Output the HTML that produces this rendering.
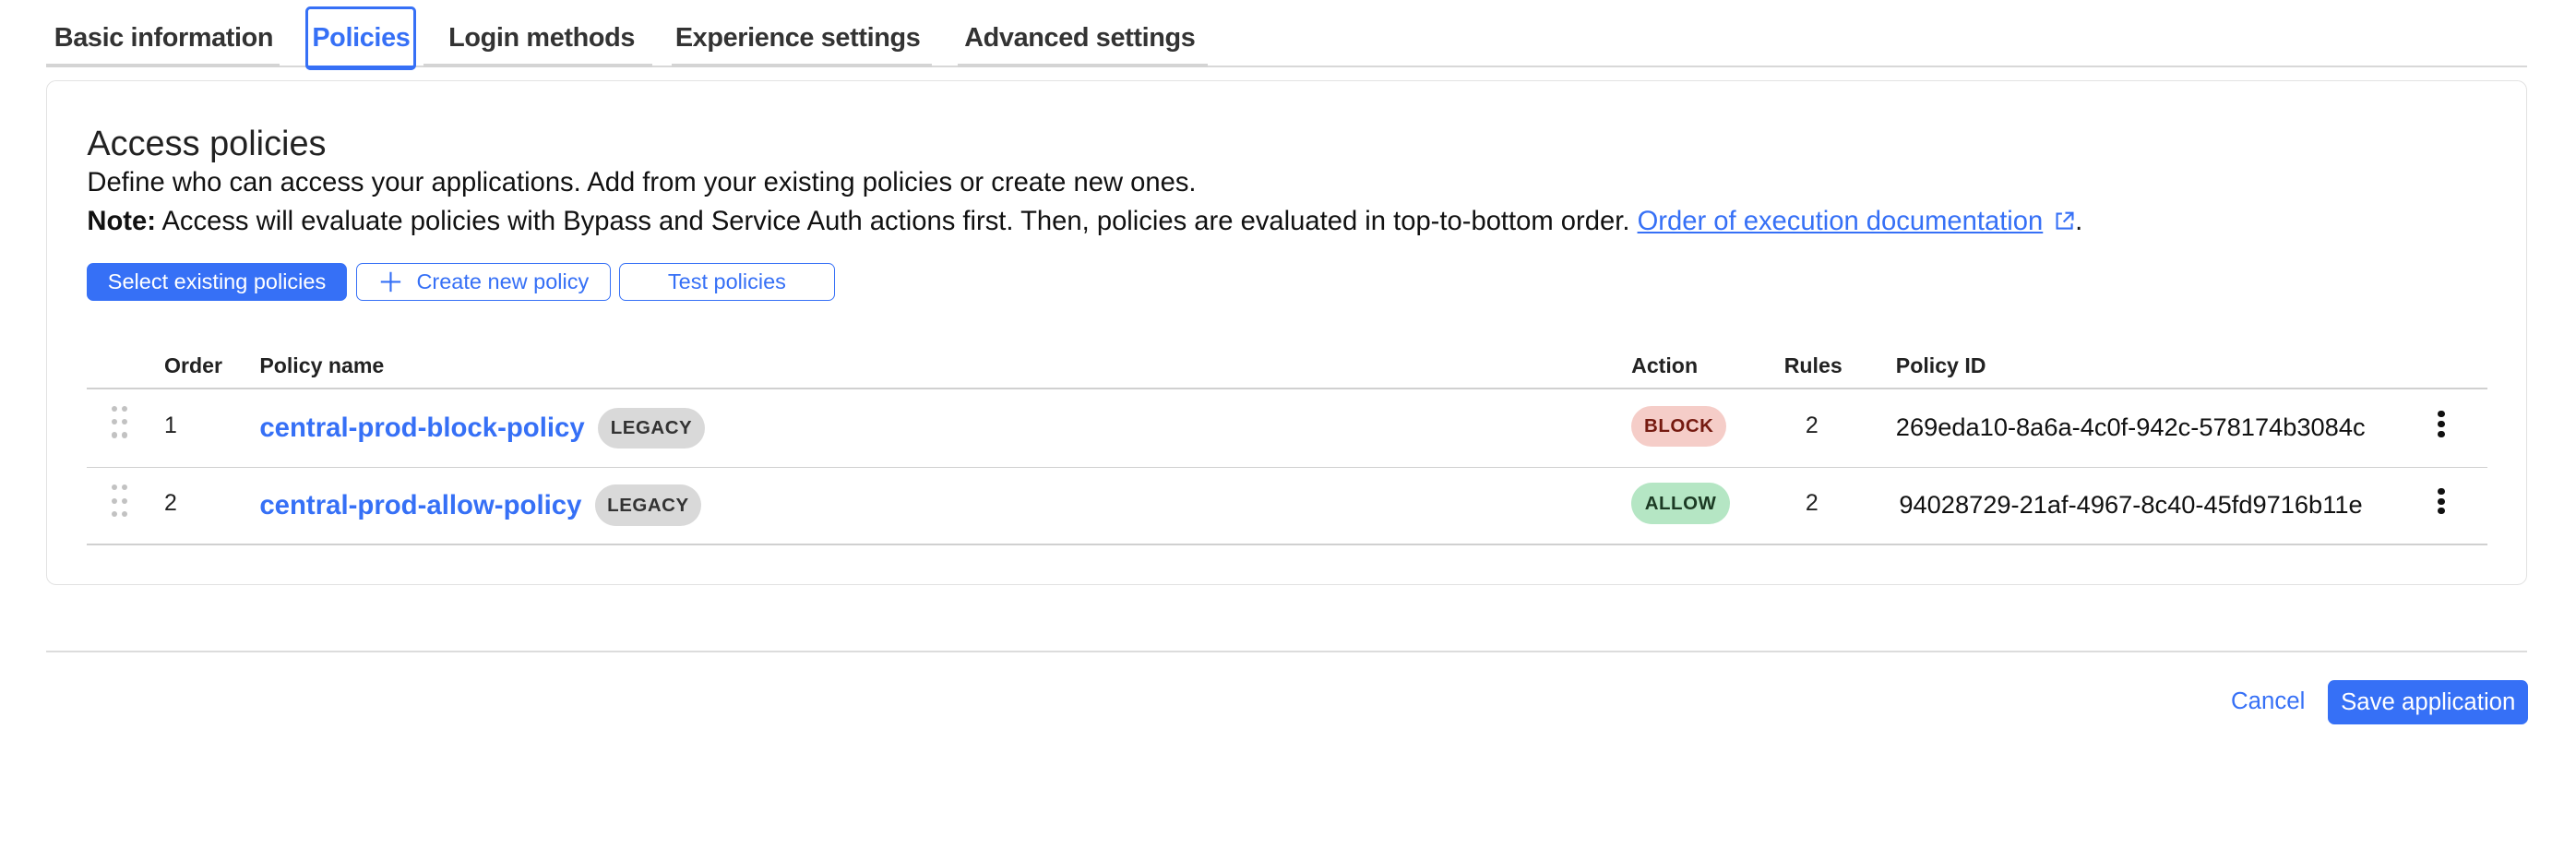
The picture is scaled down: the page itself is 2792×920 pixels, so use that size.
<!DOCTYPE html>
<html><head><meta charset="utf-8"><style>
html,body{margin:0;padding:0;background:#fff;overflow:hidden}
body{width:2792px;height:920px}
#w{zoom:1.7806;width:1568px;height:517px;position:relative;font-family:"Liberation Sans",Arial,sans-serif;color:#222}
.a{position:absolute;white-space:nowrap}
.tab{position:absolute;top:14px;font-size:16.2px;font-weight:bold;color:#333;letter-spacing:-0.2px}
.ul{position:absolute;top:39px;height:2px;background:#d4d4d4}
.blue{color:#3670f6}
.btn{position:absolute;top:160px;height:23px;border:1px solid #3670f6;border-radius:4px;box-sizing:border-box;font-size:13.2px;color:#3670f6;display:flex;align-items:center;justify-content:center}
.th{position:absolute;top:215px;font-size:13px;font-weight:bold;color:#222}
.line{position:absolute;left:53px;width:1461px;height:1px;background:#d0d0d0}
.pill{position:absolute;height:25px;border-radius:13px;font-size:11.5px;font-weight:bold;display:flex;align-items:center;justify-content:center;letter-spacing:0.3px}
.dots{position:absolute;left:68px;width:11px;height:19px}
.dots i{position:absolute;width:3.5px;height:3.5px;border-radius:50%;background:#c2c2c2}
.keb{position:absolute;left:1484px;width:4px}
.keb i{position:absolute;left:0;width:4px;height:4px;border-radius:50%;background:#111}
</style></head><body><div id="w">
<div class="tab" style="left:33px">Basic information</div>
<div class="tab blue" style="left:190px">Policies</div>
<div class="tab" style="left:273px">Login methods</div>
<div class="tab" style="left:411px">Experience settings</div>
<div class="tab" style="left:587px">Advanced settings</div>
<div class="ul" style="left:28px;width:1510px;height:1px;top:40px;background:#d8d8d8"></div>
<div class="ul" style="left:28px;width:142px"></div>
<div class="ul" style="left:258px;width:139px"></div>
<div class="ul" style="left:409px;width:158px"></div>
<div class="ul" style="left:583px;width:152px"></div>
<div class="a" style="left:186px;top:4px;width:64px;height:34px;border:2px solid #3670f6;border-radius:3px;border-bottom-width:3px"></div>

<div class="a" style="left:28px;top:49px;width:1509px;height:306px;border:1px solid #e2e2e2;border-radius:6px"></div>
<div class="a" style="left:53px;top:76px;font-size:21.3px;color:#222">Access policies</div>
<div class="a" style="left:53px;top:102px;font-size:16.4px;color:#111">Define who can access your applications. Add from your existing policies or create new ones.</div>
<div class="a" style="left:53px;top:126px;font-size:16.4px;color:#111"><b>Note:</b> Access will evaluate policies with Bypass and Service Auth actions first. Then, policies are evaluated in top-to-bottom order. <span class="blue" style="text-decoration:underline">Order of execution documentation</span> <svg width="13" height="13" viewBox="0 0 13 13" style="vertical-align:-1px;margin-left:2px"><path d="M5 2H2v9h9V8M7 1.5h4.5V6M11.5 1.5L6 7" fill="none" stroke="#3670f6" stroke-width="1.2"/></svg>.</div>

<div class="btn" style="left:53px;width:158px;background:#3670f6;color:#fff">Select existing policies</div>
<div class="btn" style="left:217px;width:155px"><svg width="14" height="14" viewBox="0 0 14 14" style="margin-right:9px"><path d="M7 1v12M1 7h12" stroke="#3670f6" stroke-width="1.2"/></svg>Create new policy</div>
<div class="btn" style="left:377px;width:131px">Test policies</div>

<div class="th" style="left:100px">Order</div>
<div class="th" style="left:158px">Policy name</div>
<div class="th" style="left:993px">Action</div>
<div class="th" style="left:1086px">Rules</div>
<div class="th" style="left:1154px">Policy ID</div>
<div class="line" style="top:236px"></div>
<div class="line" style="top:284px"></div>
<div class="line" style="top:331px"></div>

<div class="dots" style="top:247px"><i style="left:0;top:0"></i><i style="left:6px;top:0"></i><i style="left:0;top:8px"></i><i style="left:6px;top:8px"></i><i style="left:0;top:16px"></i><i style="left:6px;top:16px"></i></div>
<div class="dots" style="top:295px"><i style="left:0;top:0"></i><i style="left:6px;top:0"></i><i style="left:0;top:8px"></i><i style="left:6px;top:8px"></i><i style="left:0;top:16px"></i><i style="left:6px;top:16px"></i></div>

<div class="a" style="left:100px;top:251px;font-size:14px">1</div>
<div class="a" style="left:100px;top:298px;font-size:14px">2</div>
<div class="a blue" style="left:158px;top:251px;font-size:16.5px;font-weight:bold">central-prod-block-policy</div>
<div class="a blue" style="left:158px;top:298px;font-size:16.5px;font-weight:bold">central-prod-allow-policy</div>
<div class="pill" style="left:364px;top:248px;width:65px;background:#d9d9d9;color:#333">LEGACY</div>
<div class="pill" style="left:362px;top:295px;width:65px;background:#d9d9d9;color:#333">LEGACY</div>
<div class="pill" style="left:993px;top:247px;width:58px;background:#f5cdc8;color:#751a10">BLOCK</div>
<div class="pill" style="left:993px;top:294px;width:60px;background:#b5e6c4;color:#1c3a24">ALLOW</div>
<div class="a" style="left:1099px;top:251px;font-size:14px">2</div>
<div class="a" style="left:1099px;top:298px;font-size:14px">2</div>
<div class="a" style="left:1154px;top:251px;font-size:15.3px;color:#111">269eda10-8a6a-4c0f-942c-578174b3084c</div>
<div class="a" style="left:1156px;top:298px;font-size:15.3px;color:#111">94028729-21af-4967-8c40-45fd9716b11e</div>
<div class="keb" style="top:250px"><i style="top:0"></i><i style="top:6px"></i><i style="top:12px"></i></div>
<div class="keb" style="top:297px"><i style="top:0"></i><i style="top:6px"></i><i style="top:12px"></i></div>

<div class="a" style="left:28px;top:396px;width:1510px;height:1px;background:#dcdcdc"></div>
<div class="a blue" style="left:1358px;top:419px;font-size:14.5px">Cancel</div>
<div class="a" style="left:1417px;top:414px;width:122px;height:27px;background:#3670f6;border-radius:4px;color:#fff;font-size:14.5px;display:flex;align-items:center;justify-content:center">Save application</div>
</div></body></html>
